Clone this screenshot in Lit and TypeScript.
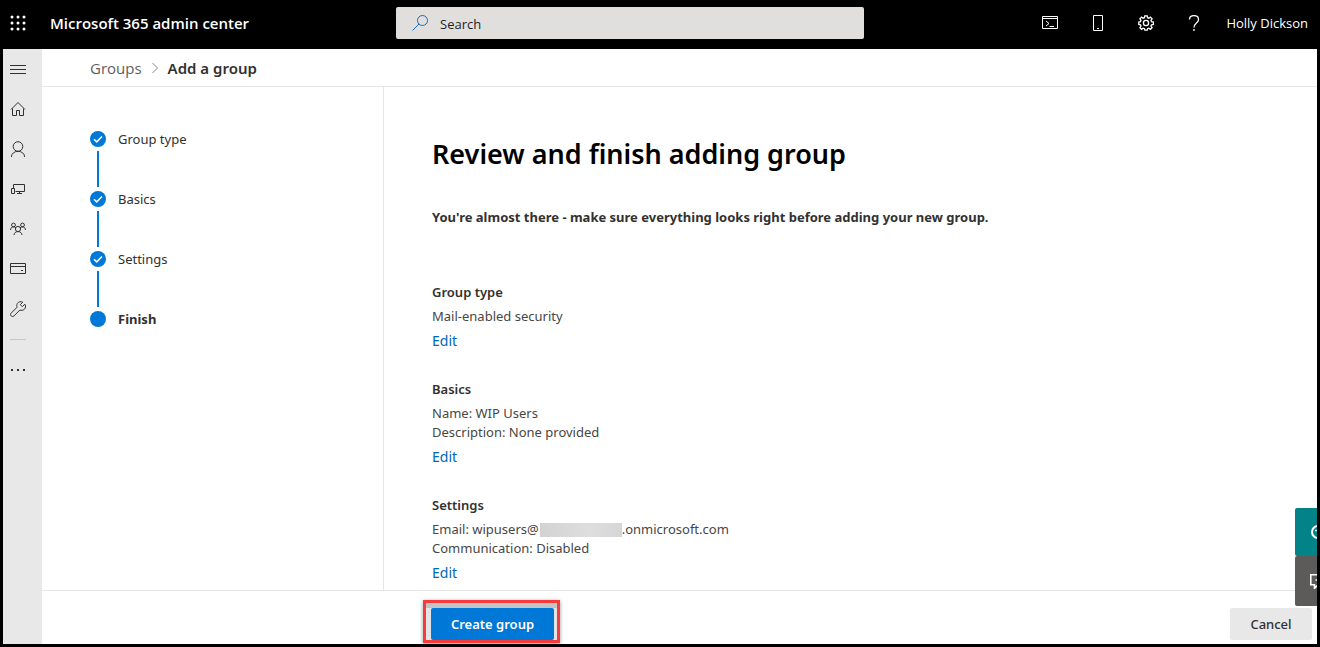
import { LitElement, html, css, svg, nothing } from "lit";
import { customElement, state } from "lit/decorators.js";

const icons = {
  waffle: svg`<g fill="currentColor" stroke="none">${[2, 8, 14].map((y) => [2, 8, 14].map((x) => svg`<circle cx=${x} cy=${y} r="1.5"/>`))}</g>`,
  search: svg`<circle cx="10.5" cy="5.5" r="5"/><path d="M7 9 .5 15.5"/>`,
  shell: svg`<path d="M.5 1.500h15v12H.5zM.5 3.500h15M4 6l3 2.500L4 11M7.500 11.500H12"/>`,
  phone: svg`<path d="M3.5.5h9v15h-9zM7 13.5h2"/>`,
  gear: svg`<g stroke-width="1.300"><circle cx="8" cy="8" r="2.600"/><path d="M6.800.8h2.400l.4 1.900 1.200.5 1.600-1.100 1.700 1.700-1.100 1.600.5 1.200 1.900.4v2.400l-1.900.4-.5 1.200 1.100 1.600-1.700 1.700-1.600-1.100-1.200.5-.4 1.500H6.800l-.4-1.500-1.200-.5-1.600 1.100-1.700-1.700L3 11l-.5-1.200-1.700-.4V7l1.700-.4.5-1.200-1.100-1.600 1.700-1.700 1.600 1.100 1.200-.5z"/></g>`,
  help: svg`<path d="M3.500 4.500C3.500 2 5.500.600 8 .600s4.500 1.400 4.500 3.900c0 3.500-4.500 3.500-4.500 8M8 14v2" stroke-width="1.300"/>`,
  menu: svg`<path d="M0 4.500h16M0 8.500h16M0 12.500h16"/>`,
  home: svg`<path d="M1 8.500 8 1.500l7 7M2.500 7.500v7h4v-5h3v5h4v-7"/>`,
  user: svg`<circle cx="8" cy="5.500" r="4.800"/><path d="M1.300 16c.3-3.500 3-5.700 6.700-5.700s6.400 2.200 6.700 5.700"/>`,
  devices: svg`<path d="M3.500 7V3.500h11v7h-9M1.500 7.500h3v5h-3zM9.500 10.500v2M7 12.500h5"/>`,
  groups: svg`<circle cx="8" cy="8" r="2.600"/><circle cx="3.500" cy="4" r="1.900"/><circle cx="12.500" cy="4" r="1.900"/><path d="M4 14c.2-2 1.500-3.400 4-3.400s3.800 1.400 4 3.400M.5 9c.2-2 1.200-3.100 3-3.100 1 0 1.700.3 2.400 1M15.500 9c-.2-2-1.200-3.100-3-3.100-1 0-1.700.3-2.400 1"/>`,
  card: svg`<path d="M.5 2.500h15v10H.5zM.5 5.500h15M11 9.500h2"/>`,
  wrench: svg`<path d="M14.800 3.200 12.300 5.700 10.300 3.700 12.800 1.200C10.700.2 8.400.7 7.300 2.500c-.7 1.200-.7 2.500-.2 3.700L1.200 12.100c-.9.900-.9 2 0 2.800s2 .8 2.800 0l5.900-5.900c3 1.200 6-1 5.600-4 0-.6-.3-1.300-.7-1.800z"/>`,
  more: svg`<path d="M1 9h2M7 9h2M13 9h2" stroke-width="2"/>`,
  chevron: svg`<path d="m5.500 3 5 5-5 5"/>`,
  check: svg`<circle cx="8" cy="8" r="8" fill="#0078d7" stroke="none"/><path d="m4 8.300 2.700 2.600L12 5.500" stroke="#fff" stroke-width="1.500"/>`,
  dot: svg`<circle cx="8" cy="8" r="8" fill="#0078d7" stroke="none"/>`,
  headset: svg`<circle cx="8" cy="8" r="6" stroke-width="2"/><path d="M5 6.500h2" stroke-width="1.500"/>`,
  feedback: svg`<path d="M.8 1.800h14.400v10H8l-3.500 3.500v-3.500H.8zM8 4v6M5.500 7h5" stroke-width="1.600"/>`,
};
type IconName = keyof typeof icons;

const icon = (name: IconName) =>
  html`<svg class="icon" viewBox="0 0 16 16" aria-hidden="true">${icons[name]}</svg>`;

const hiddenDomain = html`<span class="hidden-domain"></span>`;

@customElement("app-root")
export class AppRoot extends LitElement {
  @state() private query = "";

  private tools: [IconName, string][] = [
    ["shell", "Cloud Shell"],
    ["phone", "Mobile app"],
    ["gear", "Settings"],
    ["help", "Help"],
  ];

  private nav: [IconName, string][] = [
    ["menu", "Navigation menu"],
    ["home", "Home"],
    ["user", "Users"],
    ["devices", "Devices"],
    ["groups", "Groups"],
    ["card", "Billing"],
    ["wrench", "Setup"],
  ];

  private steps = ["Group type", "Basics", "Settings", "Finish"];

  private sections = [
    { title: "Group type", lines: [html`Mail-enabled security`] },
    { title: "Basics", lines: [html`Name: WIP Users`, html`Description: None provided`] },
    {
      title: "Settings",
      lines: [html`Email: wipusers@${hiddenDomain}.onmicrosoft.com`, html`Communication: Disabled`],
    },
  ];

  static styles = css`
    :host {
      display: flex;
      flex-direction: column;
      box-sizing: border-box;
      height: 100vh;
      border: solid #000;
      border-width: 0 3px 3px;
      overflow: hidden;
      position: relative;
      background: #fff;
      color: #323130;
      font: 13px/20px "Noto Sans", "Open Sans", sans-serif;
    }
    * { box-sizing: border-box; }
    button { font: inherit; color: inherit; border: 0; padding: 0; background: none; cursor: pointer; }
    h1, h2, p, ol { margin: 0; padding: 0; font-size: inherit; }
    ol { list-style: none; }
    a { text-decoration: none; color: inherit; }
    .icon { display: block; flex: none; width: 16px; height: 16px; fill: none; stroke: currentColor; }

    .top {
      flex: none;
      display: grid;
      grid-template-columns: 393fr 468fr 453fr;
      align-items: center;
      height: 49px;
      padding-bottom: 3px;
      background: #000;
      color: #fff;
      font-family: "Open Sans", "Noto Sans", sans-serif;
    }
    .brand { display: flex; align-items: center; }
    .waffle { display: grid; place-items: center; width: 30px; height: 46px; margin-right: 17px; }
    .product { font-size: 15px; font-weight: 600; white-space: nowrap; }
    .search {
      display: flex;
      align-items: center;
      gap: 12px;
      height: 32px;
      padding: 0 16px;
      border-radius: 2px;
      background: #e1dfdd;
      color: #106ebe;
    }
    .search input { flex: 1; min-width: 0; padding: 2px 0 0; border: 0; outline: 0; background: none; font: inherit; color: #201f1e; }
    .search input::placeholder { color: #201f1e; opacity: 1; }
    .tools { display: flex; align-items: center; justify-content: flex-end; padding-right: 9px; }
    .tool { display: grid; place-items: center; width: 48px; height: 46px; }
    .user { margin-left: 8px; white-space: nowrap; }

    .body { flex: 1; min-height: 0; display: flex; }
    .rail { flex: none; width: 39px; background: #e8e8e8; color: #323130; }
    .rail-item { display: grid; place-items: center; width: 30px; height: 40px; }
    .rule { width: 16px; margin: 10px 7px 9px; border: 0; border-top: 1px solid #c8c6c4; }

    .page { flex: 1; min-width: 0; display: flex; flex-direction: column; }
    .crumbs {
      flex: none;
      display: flex;
      align-items: center;
      gap: 5px;
      height: 38px;
      padding-left: 48px;
      border-bottom: 1px solid #e6e6e6;
      font-size: 15px;
    }
    .crumbs .icon { color: #8a8886; }
    .crumbs a { color: #605e5c; font-family: "Open Sans", "Noto Sans", sans-serif; }
    .current { font-weight: 600; }

    .wizard { flex: 1; min-height: 0; display: grid; grid-template-columns: 342px 1fr; }
    .steps { padding: 42px 48px; border-right: 1px solid #e6e6e6; }
    .step {
      display: grid;
      grid-template-columns: 16px 1fr;
      grid-template-rows: 20px 36px;
      gap: 2px 12px;
      align-items: center;
      height: 60px;
    }
    .line { justify-self: center; width: 2px; height: 36px; background: #0078d7; }
    .active { font-weight: 700; }

    .review { min-width: 0; padding: 47px 48px 0; overflow: hidden; }
    .review h1 { color: #000; font-size: 27px; line-height: 40px; font-weight: 600; }
    .intro { margin-top: 33px; font-weight: 700; }
    .sections { display: grid; gap: 26px; margin-top: 55px; }
    .section { display: flex; flex-direction: column; align-items: flex-start; }
    .section h2 { margin-bottom: 5px; font-weight: 600; }
    .section p { line-height: 19px; color: #484644; }
    .edit { margin-top: 4px; margin-bottom: 1px; font-size: 14px; line-height: 22px; color: #0067b8; }
    .hidden-domain {
      display: inline-block;
      width: 82px;
      height: 14px;
      margin-left: 1px;
      vertical-align: -3px;
      background: linear-gradient(90deg, #d2d2d2, #dedede 60%, #d6d6d6);
    }

    .actions {
      flex: none;
      display: flex;
      align-items: flex-end;
      justify-content: space-between;
      height: 54px;
      padding: 0 5px 0 381px;
      border-top: 1px solid #e6e6e6;
    }
    .highlight {
      padding: 5px 3px 0 5px;
      border: 3px solid #f53c3c;
      background: linear-gradient(#c4c4c4 5px, #e4e4e4 5px);
      box-shadow: 0 1px 4px #999;
      margin-bottom: 1px;
    }
    .primary { display: block; width: 123px; height: 32px; border-radius: 2px; background: #0078d7; color: #fff; font-weight: 600; }
    .cancel { width: 82px; height: 32px; margin-bottom: 4px; border-radius: 2px; background: #e8e8e8; font-weight: 500; }

    .float { position: absolute; right: -26px; bottom: 38px; width: 48px; color: #fff; }
    .float button { display: flex; align-items: center; width: 48px; height: 50px; padding-left: 15px; border-radius: 2px; background: #5d5b59; }
    .float .help { height: 48px; background: #038387; }
  `;

  render() {
    return html`
      <header class="top">
        <div class="brand">
          <button class="waffle" aria-label="App launcher">${icon("waffle")}</button>
          <span class="product">Microsoft 365 admin center</span>
        </div>
        <label class="search">
          ${icon("search")}
          <input
            type="text"
            aria-label="Search"
            placeholder="Search"
            .value=${this.query}
            @input=${(e: Event) => (this.query = (e.target as HTMLInputElement).value)}
          />
        </label>
        <div class="tools">
          ${this.tools.map(([name, label]) => html`<button class="tool" aria-label=${label}>${icon(name)}</button>`)}
          <button class="user">Holly Dickson</button>
        </div>
      </header>
      <div class="body">
        <nav class="rail">
          ${this.nav.map(([name, label]) => html`<button class="rail-item" aria-label=${label}>${icon(name)}</button>`)}
          <hr class="rule" />
          <button class="rail-item" aria-label="Show all">${icon("more")}</button>
        </nav>
        <div class="page">
          <nav class="crumbs">
            <a href="#groups">Groups</a>${icon("chevron")}<span class="current">Add a group</span>
          </nav>
          <div class="wizard">
            <ol class="steps">
              ${this.steps.map((label, i) => {
                const last = i === this.steps.length - 1;
                return html`<li class="step">
                  ${icon(last ? "dot" : "check")}
                  <span class=${last ? "active" : ""}>${label}</span>
                  ${last ? nothing : html`<span class="line"></span>`}
                </li>`;
              })}
            </ol>
            <main class="review">
              <h1>Review and finish adding group</h1>
              <p class="intro">You're almost there - make sure everything looks right before adding your new group.</p>
              <div class="sections">
                ${this.sections.map(
                  (s) => html`<section class="section">
                    <h2>${s.title}</h2>
                    ${s.lines.map((line) => html`<p>${line}</p>`)}
                    <a class="edit" href="#edit">Edit</a>
                  </section>`
                )}
              </div>
            </main>
          </div>
          <footer class="actions">
            <div class="highlight"><button class="primary">Create group</button></div>
            <button class="cancel">Cancel</button>
          </footer>
        </div>
      </div>
      <div class="float">
        <button class="help" aria-label="Need help?">${icon("headset")}</button>
        <button aria-label="Give feedback">${icon("feedback")}</button>
      </div>
    `;
  }
}
